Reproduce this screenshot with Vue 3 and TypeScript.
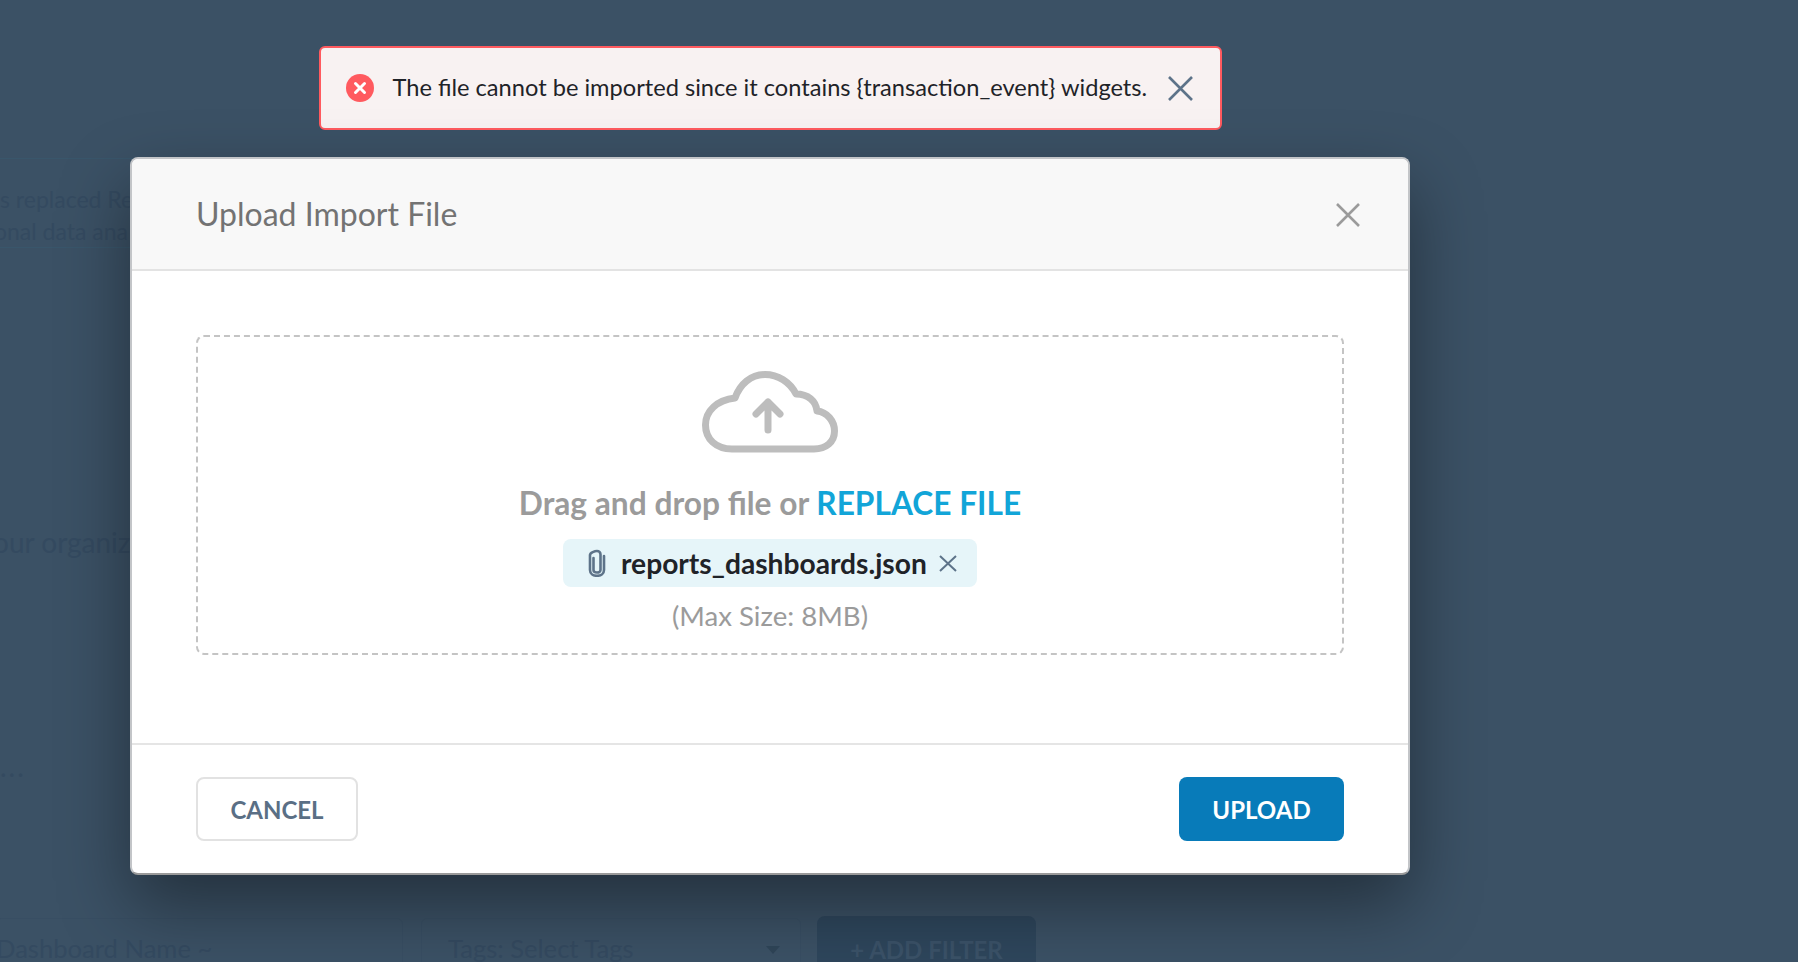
<script setup lang="ts">
const fileName = 'reports_dashboards.json'
</script>

<template>
  <div class="page">
    <div class="under">
      <section class="notice">
        <p>s replaced Re</p>
        <p class="second">onal data ana</p>
      </section>
      <p class="lead">our organiz</p>
      <div class="dots">...</div>
      <div class="filters">
        <div class="filter name">Dashboard Name ~</div>
        <div class="filter tags">
          <span>Tags: Select Tags</span>
          <i class="caret"></i>
        </div>
        <div class="add">+ ADD FILTER</div>
      </div>
    </div>

    <div class="overlay">
      <div class="toast">
        <svg class="toast-icon" width="28" height="28" viewBox="0 0 28 28">
          <circle cx="14" cy="14" r="14" fill="#ff5a5f" />
          <path d="M9.5 9.500l9 9M18.500 9.500l-9 9" stroke="#fff" stroke-width="3" stroke-linecap="round" />
        </svg>
        <span class="toast-text">The file cannot be imported since it contains {transaction_event} widgets.</span>
        <svg class="toast-close" width="25" height="25" viewBox="0 0 25 25">
          <path d="M1 1l23 23M24 1L1 24" stroke="#5d7389" stroke-width="2.6" fill="none" />
        </svg>
      </div>

      <div class="modal">
        <header class="head">
          <h2>Upload Import File</h2>
          <svg class="head-x" width="24" height="24" viewBox="0 0 24 24">
            <path d="M1 1l22 22M23 1L1 23" stroke="#9b9b9b" stroke-width="2.6" fill="none" />
          </svg>
        </header>

        <div class="body">
          <div class="drop">
            <svg class="cloud" width="136" height="82" viewBox="0 0 136 82">
              <path
                d="M30 78C14 78 3.500 68 3.500 54C3.500 40 15 29 33 27C38 13 49 3.500 63 3.500C76 3.500 88 11 94 23C106 23 114 30 115 40C125 41 132.500 50 132.500 60C132.500 71 124 78 112 78Z"
                fill="none" stroke="#bdbdbd" stroke-width="7" stroke-linejoin="round" />
              <path d="M66 59V31M54 43L66 31L78 43" fill="none" stroke="#bdbdbd" stroke-width="7"
                stroke-linecap="round" stroke-linejoin="round" />
            </svg>
            <div class="drag">Drag and drop file or <span class="replace">REPLACE FILE</span></div>
            <div class="chip">
              <svg class="clip" width="18" height="28" viewBox="0 0 18 28">
                <path d="M5.500 9v12c0 1.500 1.500 2.500 3.500 2.500s3.500-1 3.500-2.500V5.500C12.500 3.500 11 2 9 2S2 3.500 2 6v15c0 3.500 3 5.800 7 5.800s7-2.300 7-5.800V7"
                  fill="none" stroke="#5d7389" stroke-width="2.6" stroke-linecap="round" />
              </svg>
              <span class="file">{{ fileName }}</span>
              <svg class="chip-x" width="18" height="17" viewBox="0 0 18 17">
                <path d="M1 1l16 15M17 1L1 16" stroke="#5d7389" stroke-width="2" fill="none" />
              </svg>
            </div>
            <div class="max">(Max Size: 8MB)</div>
          </div>
        </div>

        <footer class="foot">
          <button class="btn cancel" type="button">CANCEL</button>
          <button class="btn upload" type="button">UPLOAD</button>
        </footer>
      </div>
    </div>
  </div>
</template>

<style>
html,
body {
  margin: 0;
  background: #3b5165;
}
</style>

<style scoped>
.page {
  position: relative;
  width: 1798px;
  height: 962px;
  overflow: hidden;
  background: #3b5165;
  font-family: Lato, "Liberation Sans", sans-serif;
}

.under {
  display: flex;
  flex-direction: column;
  height: 100%;
  color: #344a60;
}

.notice {
  box-sizing: border-box;
  width: 1300px;
  height: 115px;
  margin-top: 158px;
  padding-top: 24px;
  border: 1px solid #39566b;
  border-width: 1px 0;
  font-size: 23px;
  line-height: 32px;
}

.notice p {
  margin: 0;
}

.notice .second {
  margin-left: -6px;
}

.lead {
  margin: 277px 0 0 -7px;
  font-size: 28px;
  line-height: 34px;
}

.dots {
  margin-top: 193px;
  font-size: 28px;
  line-height: 28px;
  letter-spacing: 2px;
}

.filters {
  display: flex;
  margin: 136px 0 0 -5px;
  align-items: flex-start;
  font-size: 25.6px;
  line-height: 32px;
}

.filter {
  box-sizing: border-box;
  height: 64px;
  margin-top: 2px;
  border: 1px solid #384e63;
  border-radius: 6px;
  padding-top: 13px;
}

.name {
  width: 408px;
}

.tags {
  display: flex;
  justify-content: space-between;
  width: 380px;
  margin-left: 18px;
  padding-right: 20px;
  padding-left: 26px;
}

.caret {
  width: 0;
  height: 0;
  margin-top: 14px;
  border: 7px solid transparent;
  border-top: 8px solid #2f4558;
  border-bottom: 0;
}

.add {
  box-sizing: border-box;
  width: 219px;
  height: 64px;
  margin-left: 16px;
  padding-top: 18px;
  border-radius: 8px;
  background: #2e465c;
  color: #3b5268;
  text-align: center;
  font-size: 24px;
  font-weight: 700;
}

.overlay {
  position: absolute;
  top: 46px;
  left: 130px;
  display: flex;
  flex-direction: column;
  align-items: center;
  width: 1280px;
}

.toast {
  box-sizing: border-box;
  display: flex;
  align-items: center;
  width: 903px;
  height: 84px;
  padding: 0 27px 0 25px;
  border: 2px solid #ff5a5f;
  border-radius: 6px;
  background: #f8f2f2;
  color: #1f2328;
  font-size: 23.64px;
}

.toast-text {
  margin: 0 0 3px 19px;
  white-space: nowrap;
}

.toast-close {
  margin-left: auto;
}

.modal {
  box-sizing: border-box;
  display: flex;
  flex-direction: column;
  width: 1280px;
  height: 718px;
  margin-top: 27px;
  border: 2px solid #c3c5c8;
  border-bottom-color: #9a9a9a;
  border-radius: 8px;
  background: #fff;
  box-shadow: 0 30px 70px rgba(0, 0, 0, 0.4);
  overflow: hidden;
}

.head {
  box-sizing: border-box;
  display: flex;
  align-items: center;
  justify-content: space-between;
  height: 112px;
  padding: 0 48px 0 64px;
  border-bottom: 2px solid #e3e3e3;
  background: #f8f8f8;
}

.head h2 {
  margin: 0 0 2px;
  color: #737373;
  font-size: 32px;
  font-weight: 400;
}

.head-x {
  margin-top: 2px;
}

.body {
  flex: 1;
  padding: 64px 64px 0;
}

.drop {
  box-sizing: border-box;
  display: flex;
  flex-direction: column;
  align-items: center;
  height: 320px;
  padding-top: 34px;
  border: 2px dashed #c4c4c4;
  border-radius: 8px;
}

.drag {
  margin-top: 30px;
  color: #9b9b9b;
  font-size: 31.7px;
  font-weight: 700;
  line-height: 40px;
}

.replace {
  color: #12a5d8;
}

.chip {
  box-sizing: border-box;
  display: flex;
  align-items: center;
  width: 414px;
  height: 48px;
  margin-top: 16px;
  padding-left: 25px;
  border-radius: 8px;
  background: #e6f5f9;
  color: #1f2328;
  font-size: 28.2px;
  font-weight: 700;
}

.file {
  margin-left: 15px;
}

.chip-x {
  margin-left: 12px;
}

.max {
  margin-top: 12px;
  color: #9b9b9b;
  font-size: 27.6px;
  line-height: 34px;
}

.foot {
  box-sizing: border-box;
  display: flex;
  justify-content: space-between;
  align-items: flex-start;
  height: 130px;
  padding: 32px 64px 0;
  border-top: 2px solid #e5e5e5;
}

.btn {
  box-sizing: border-box;
  height: 64px;
  border-radius: 8px;
  font-family: inherit;
  font-size: 24px;
  font-weight: 700;
}

.cancel {
  width: 162px;
  border: 2px solid #e2e2e2;
  background: #fff;
  color: #5a6f85;
}

.upload {
  width: 165px;
  border: 0;
  background: #087bb9;
  color: #fff;
}
</style>
